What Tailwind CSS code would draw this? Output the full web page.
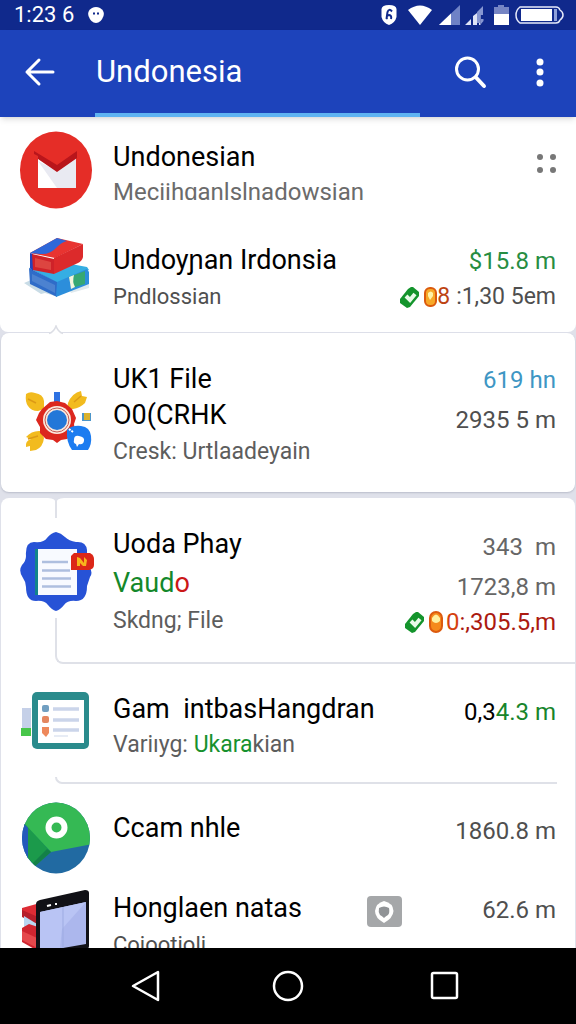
<!DOCTYPE html>
<html lang="id">

<head>
  <meta charset="UTF-8" />
  <meta name="viewport" content="width=device-width, initial-scale=1" />
  <script src="https://cdn.jsdelivr.net/npm/@tailwindcss/browser@4"></script>
  <title>Undonesia</title>
</head>

<body class="h-screen flex flex-col bg-[#dfe1ea] font-['Roboto','Liberation_Sans',sans-serif] text-black">

  <!-- Status bar -->
  <div class="h-[30px] shrink-0 flex items-center bg-[#10298c] text-white pl-[14px] pr-3">
    <span class="text-[22px] leading-[26px]">1:23 6</span>
    <svg class="ml-[14px] w-4 h-4" viewBox="0 0 16 16">
      <path d="M4 1Q8-1 12 1q5 3 3.500 8Q13 16 8 16T.5 9Q-1 4 4 1z" fill="#fff" />
      <path d="M5 6.500h2M9 6.500h2" stroke="#10298c" stroke-width="2" />
    </svg>
    <div class="ml-auto flex items-center">
      <svg class="w-4 h-5" viewBox="0 0 16 20">
        <path d="M8 0q7 0 7.500 4v8Q14 18 8 20Q2 18 .5 12V4Q1 0 8 0z" fill="#fff" />
        <path d="M11 6.500Q8 3 6.500 7l-1 7M6 14q-1-4 2-4 3 .5 2 4" fill="none" stroke="#10298c" stroke-width="2" />
      </svg>
      <svg class="ml-[10px] w-[26px] h-5" viewBox="0 0 26 20">
        <path d="M1 5Q13-4 25 5L13 20z" fill="#fff" />
      </svg>
      <svg class="ml-[6px] w-[21px] h-5" viewBox="0 0 21 20">
        <path d="M0 20L21 0v20z" fill="#6f82c6" />
        <path d="M0 20L12 8.500V20z" fill="#fff" />
      </svg>
      <svg class="ml-[5px] w-5 h-5" viewBox="0 0 20 20">
        <path d="M0 20l6-6v6zM8 20V11l4-3v12zM14 10v10h1.500V4L14 6z" fill="#dfe4f7" />
        <path d="M12 7l6-6v9h-3v8h-3zM16 19v-5h2.500v2L16 19z" fill="#8797d2" />
      </svg>
      <svg class="ml-[9px] w-[15px] h-5" viewBox="0 0 15 20">
        <path d="M0 2h4V0h6v2h5v18H0z" fill="#7685c4" />
        <path d="M0 9h15v11H0z" fill="#fff" />
      </svg>
      <svg class="ml-[6px] w-[49px] h-[18px]" viewBox="0 0 49 18">
        <path d="M5 1h36q3 0 4 3 3 2 3 5t-3 5q-1 3-4 3H5Q1 14 1 9t4-8z" fill="none" stroke="#e6eafa" stroke-width="1.500" />
        <rect x="6" y="3" width="31" height="12" fill="#fff" />
        <path d="M39 3h3v12h-3z" fill="#8fa0da" />
      </svg>
    </div>
  </div>

  <!-- App bar -->
  <header class="h-[87px] shrink-0 relative z-10 flex items-center bg-[#1d43bb] text-white pl-5 pr-4 pb-[3px] shadow-md">
    <button aria-label="Back" class="w-10 h-10 grid place-items-center">
      <svg class="w-10 h-10" viewBox="0 0 40 40" fill="none" stroke="#fff" stroke-width="3" stroke-linecap="round" stroke-linejoin="round">
        <path d="M33 20H7M19 8L7 20l12 12" />
      </svg>
    </button>
    <h1 class="ml-9 text-[31px] leading-10">Undonesia</h1>
    <button aria-label="Search" class="ml-auto w-10 h-10 grid place-items-center">
      <svg class="w-10 h-10" viewBox="0 0 40 40" fill="none" stroke="#fff" stroke-width="3" stroke-linecap="round">
        <circle cx="15.500" cy="17" r="11" />
        <path d="M24 25.500L32 34" stroke-width="4" />
      </svg>
    </button>
    <button aria-label="More options" class="ml-7 w-10 h-10 grid place-items-center">
      <svg class="w-10 h-10" viewBox="0 0 40 40" fill="#fff">
        <circle cx="20" cy="10" r="3.500" />
        <circle cx="20" cy="20" r="3.500" />
        <circle cx="20" cy="31" r="3.500" />
      </svg>
    </button>
    <div class="absolute bottom-0 left-[95px] right-[156px] h-1 bg-[#5eb3f2]"></div>
  </header>

  <main class="flex-1 min-h-0 overflow-hidden">
    <!-- Top results -->
    <section class="bg-white pt-[14px] pb-4 rounded-b-lg">
      <article class="grid grid-cols-[72px_1fr_auto] gap-x-[21px] px-5">
        <svg class="w-[72px] h-[78px]" viewBox="0 0 72 78">
          <ellipse cx="36" cy="39" rx="36" ry="38.500" fill="#e52d27" />
          <path d="M18 27v30h38V27L37 40z" fill="#fff" />
          <path d="M18 30l19 27h19V27L37 40z" fill="#e9eaf2" />
          <path d="M18 27l19 13 19-13v-6H18z" fill="#e52d27" />
          <path d="M14 20l23 14 20-14v7L37 41 18 28v-3l-4-2z" fill="#b9151b" />
        </svg>
        <div class="mt-2">
          <h2 class="text-[27px] leading-9">Undonesian</h2>
          <p class="text-[24px] leading-[34px] text-[#6b6b6b] whitespace-nowrap">Meciihɑanlslnadowsian</p>
        </div>
        <button aria-label="Reorder" class="mt-[22px] h-5 w-5 grid grid-cols-2 gap-[6px] place-items-center">
          <span class="w-[6px] h-[6px] rounded-full bg-[#777]"></span>
          <span class="w-[6px] h-[6px] rounded-full bg-[#777]"></span>
          <span class="w-[6px] h-[6px] rounded-full bg-[#777]"></span>
          <span class="w-[6px] h-[6px] rounded-full bg-[#777]"></span>
        </button>
      </article>

      <article class="mt-7 grid grid-cols-[72px_1fr_auto] gap-x-[21px] px-5">
        <svg class="w-[72px] h-[64px]" viewBox="0 0 72 64">
          <path d="M4 46l7-3 33 13-9 3-10-3-4 1z" fill="#c9dce6" />
          <path d="M48 50l21-5v6l-18 5z" fill="#dfe9ed" />
          <path d="M9 31l31-6 27 5 2 3-32 13z" fill="#35aee3" />
          <path d="M9 31l28 14v15L10 47z" fill="#2f6cc8" />
          <path d="M12 37l23 11v8L12 44z" fill="#4c82d0" />
          <path d="M37 45l30-13 2 3v12L36 60z" fill="#2c8edb" />
          <path d="M49 40l16-6v13l-13 4z" fill="#36a873" />
          <path d="M49 40l5-2q-2 7 1 12l-4 2q-1-7-2-12z" fill="#f4f5df" />
          <path d="M10 16L37 1l26 6-28 14z" fill="#e83431" />
          <path d="M10 16L37 1l10 3q-5 1-10 6-7 8-17 7z" fill="#2e68d9" />
          <path d="M10 16l3 1v17l-3-3z" fill="#2343bb" />
          <path d="M12 17l22 5v15L13 33z" fill="#cf2229" />
          <path d="M15 21l16 4v8l-16-3z" fill="#dd4540" />
          <path d="M34 21L63 7v13q-1 4-5 6l-24 11z" fill="#dc2a2b" />
        </svg>
        <div class="mt-[5px]">
          <h2 class="text-[27px] leading-9">Undoyɲan Irdonsia</h2>
          <p class="text-[22px] leading-[38px] text-[#4f4f4f]">Pndlossian</p>
        </div>
        <div class="mt-[6px] flex flex-col items-end text-[24px] whitespace-nowrap">
          <p class="leading-9 text-[#278d42]">$15.8 m</p>
          <p class="flex items-center text-[23px] leading-9 text-[#4f4f4f]">
            <svg class="w-[21px] h-[23px] mr-1" viewBox="0 0 21 23">
              <path d="M12 1h2l6 5v4l-9 11-3 1-7-5v-4l8-10z" fill="#14942c" />
              <path d="M7 10l4 4 5-6" fill="none" stroke="#e9fbe9" stroke-width="4" />
            </svg>
            <svg class="w-[13px] h-5" viewBox="0 0 13 20">
              <rect x="1" y="1" width="11" height="18" rx="5" fill="#f7a928" stroke="#db5a0c" stroke-width="2" />
              <path d="M4 6q3-3 5 0v3l-3 4-2-4z" fill="#fff3a6" />
            </svg>
            <span class="text-[#bd4312]">8</span>
            <span class="ml-[6px]">:1,30 5em</span>
          </p>
        </div>
      </article>
    </section>

    <!-- File card -->
    <section class="relative mt-px mx-px bg-white rounded-lg pt-7 pb-[21px] shadow-[0_1px_2px_#b9bdca]">
      <svg class="absolute -top-2 left-[47px] w-4 h-[10px]" viewBox="0 0 16 10">
        <path d="M1 8.500Q6 7 8 1q2 6 7 7.500V10H1z" fill="#fff" />
        <path d="M1 8.500Q6 7 8 1q2 6 7 7.500" fill="none" stroke="#dcdee5" stroke-width="1.500" />
      </svg>
      <article class="grid grid-cols-[72px_1fr_auto] gap-x-[21px] px-[19px]">
        <svg class="mt-7 w-[72px] h-[66px]" viewBox="0 0 72 66">
          <path d="M6 5q4-3 9-1 8 1 9 8v8l-6 2q-7 0-10-5-3-4-2-12z" fill="#f2bb1e" />
          <path d="M48 14Q52 4 61 2l1 5 5 1-2 6q-5 5-12 6h-6z" fill="#f2bb1e" />
          <path d="M6 48q6-7 15-6l3 7q-1 9-8 12l-6 1v-5l-4 1q-1-6 5-8z" fill="#f2bb1e" />
          <path d="M8 10l8 4M61 7l-7 6M8 50l10-3" stroke="#dc9a16" stroke-width="1.500" />
          <path d="M34 3h6v12h-6z" fill="#2e72e2" />
          <path d="M62 24h9v8h-9z" fill="#4c95c9" />
          <path d="M64 24h6v7h-6z" fill="#d9b12c" />
          <path d="M22 20l8-7 7-1 8 2 7 6 4 9-2 6 1 8-8 7-6 1-4 3-4-3-7-1-6-6v-6l-4-7 3-7z" fill="#dc271e" />
          <circle cx="37" cy="31" r="14" fill="#fbe9de" />
          <circle cx="37" cy="31" r="12" fill="none" stroke="#c65b54" stroke-width="1" />
          <circle cx="37" cy="31" r="10" fill="#2377d8" />
          <path d="M47 41q5-5 14-4 9 1 10 10 1 8-3 14H52q-6-8-5-20z" fill="#1c7cf0" />
          <path d="M54 51q0-5 5-4 6 1 5 5-1 4-5 3l-2 3-1-3q-3-1-2-4z" fill="#fff" />
          <path d="M49 40l4 3" stroke="#fff" stroke-width="2" stroke-dasharray="2 1" />
        </svg>
        <div>
          <h2 class="text-[27px] leading-9">UK1 File<br />O0(CRHK</h2>
          <p class="text-[23px] leading-[38px] text-[#5d5d5d] whitespace-nowrap">Cresk: Urtlaadeyain</p>
        </div>
        <div class="text-right text-[24px] whitespace-nowrap">
          <p class="leading-[38px] text-[#3e96c4]">619 hn</p>
          <p class="leading-[42px] text-[#4f4f4f]">2935 5 m</p>
        </div>
      </article>
    </section>

    <!-- Thread card -->
    <section class="relative mt-[6px] mx-px bg-white rounded-t-lg pt-7">
      <svg class="absolute top-0 left-[47px] w-4 h-5" viewBox="0 0 16 20">
        <path d="M0 0q8 0 8 6 0-6 8-6z" fill="#dfe1ea" />
        <path d="M8 3v17" stroke="#dfe1e8" stroke-width="2" />
      </svg>
      <article class="grid grid-cols-[72px_1fr_auto] gap-x-[21px] px-[19px]">
        <svg class="mt-[6px] w-[76px] h-20" viewBox="0 0 76 80">
          <path d="M36 0q5 1 9 5t11 5q10-1 11 8v10q0 4 3 8 3 5 0 9l-3 9q0 15-11 15-8-1-12 4t-8 6q-4-1-8-6t-12-4Q6 69 6 55q0-5-3-9-5-7-1-13 4-4 4-9-1-14 8-14 10 1 13-4 4-5 9-6z" fill="#2752d6" />
          <path d="M15 17h4v46h-4z" fill="#12848b" />
          <path d="M18 17h39v46H18z" fill="#f8faff" />
          <path d="M22 30h26M22 38.500h28M22 46.500h29M22 54.500h29" stroke="#aebfdf" stroke-width="2.500" />
          <path d="M54 21h16q4 2 4 6v6q0 4-5 5H51V24z" fill="#dc2718" />
          <path d="M57 25l3 1 4 5v-6l3 3-1 6h-3l-3-3v3h-3z" fill="#f8b51c" />
        </svg>
        <div>
          <h2 class="text-[27px] leading-9">Uoda Phay</h2>
          <p class="text-[27px] leading-[42px] text-[#14882a]">Vaud<span class="text-[#cb1717]">o</span></p>
          <p class="text-[23px] leading-[34px] text-[#5d5d5d]">Skdng; File</p>
        </div>
        <div class="flex flex-col items-end text-[24px] text-[#666] whitespace-nowrap">
          <p class="leading-[42px]">343&nbsp; m</p>
          <p class="leading-[38px]">1723,8 m</p>
          <p class="flex items-center leading-8 text-[#ab1a10]">
            <svg class="w-[21px] h-[23px] mr-1" viewBox="0 0 21 23">
              <path d="M12 1h2l6 5v4l-9 11-3 1-7-5v-4l8-10z" fill="#14942c" />
              <path d="M7 10l4 4 5-6" fill="none" stroke="#e9fbe9" stroke-width="4" />
            </svg>
            <svg class="mr-[2px] w-[15px] h-[22px]" viewBox="0 0 15 22">
              <rect x="1" y="1" width="12" height="20" rx="6" fill="#f58a1c" stroke="#dc5a0e" stroke-width="2" />
              <path d="M3 10V7q4-7 8 0v3q-4 4-8 0z" fill="#fff0a0" />
            </svg>
            <span class="text-[#d5420f]">0</span>:,305.5,m
          </p>
        </div>
      </article>
      <div class="ml-[54px] mt-[-20px] h-[46px] border-l-2 border-b-2 border-[#dfe1e8] rounded-bl-lg"></div>

      <article class="pt-[27px] grid grid-cols-[72px_1fr_auto] gap-x-[21px] px-[19px]">
        <svg class="w-[72px] h-[60px]" viewBox="0 0 72 60">
          <path d="M2 17h9v22H2z" fill="#c5d0e8" />
          <path d="M1 37h10v8H1z" fill="#48c64a" />
          <rect x="12" y="1" width="57" height="57" rx="5" fill="#2a8b8c" />
          <path d="M18 9h46v43H18z" fill="#fff" />
          <rect x="22" y="14" width="7" height="7" rx="2" fill="#719fc1" />
          <rect x="22" y="25" width="7" height="7" rx="2" fill="#e48760" />
          <path d="M22 36h7v6l-3 4-4-4z" fill="#ee895c" />
          <path d="M33 18h26M33 29h26M33 39h26" stroke="#cbd5ea" stroke-width="3.500" />
          <path d="M34 45h14" stroke="#e7ecf5" stroke-width="2" />
        </svg>
        <div>
          <h2 class="text-[27px] leading-9 whitespace-nowrap">Gam&nbsp; intbasHangdran</h2>
          <p class="text-[23px] leading-9 text-[#5d5d5d]">Variıyg: <span class="text-[#17912e]">Ukara</span>kian</p>
        </div>
        <p class="text-right text-[24px] leading-[42px] whitespace-nowrap">0,3<span class="text-[#17852b]">4.3 m</span></p>
      </article>
      <div class="ml-[54px] mr-[18px] mt-[14px] h-[7px] border-l-2 border-b-2 border-[#dfe1e8] rounded-bl-lg"></div>

      <article class="pt-[18px] grid grid-cols-[72px_1fr_auto] gap-x-[21px] px-[19px]">
        <svg class="w-[72px] h-[72px]" viewBox="0 0 72 72">
          <clipPath id="globe">
            <ellipse cx="36" cy="36" rx="34" ry="35.500" />
          </clipPath>
          <g clip-path="url(#globe)">
            <path d="M0 0h72v72H0z" fill="#216aa2" />
            <path d="M0 18L31 50 72 42V0H0z" fill="#35b954" />
            <path d="M3 20l28 30-16 14-9-10z" fill="#1b9a4b" />
            <path d="M27 47l4 3-17 15-1-4z" fill="#138048" />
            <path d="M0 17l8 9v34L0 56z" fill="#2459bb" />
          </g>
          <circle cx="36.500" cy="25.500" r="8" fill="none" stroke="#fff" stroke-width="6" />
        </svg>
        <h2 class="mt-2 text-[27px] leading-9">Ccam nhle</h2>
        <p class="mt-[11px] text-right text-[24px] leading-9 text-[#4f4f4f]">1860.8 m</p>
      </article>

      <article class="pt-4 grid grid-cols-[72px_1fr_auto] gap-x-[21px] px-[19px]">
        <svg class="w-[72px] h-[62px]" viewBox="0 0 72 62">
          <path d="M2 18l18-5 4 10-10 8L2 26z" fill="#dd2c35" />
          <path d="M2 20l16 7v8L2 27z" fill="#b61f2b" />
          <path d="M4 26l13 8v9L4 38z" fill="#b9d7f2" />
          <path d="M2 38l7-4 9 3v24L2 52z" fill="#cf2530" />
          <path d="M2 41l15 7v10L2 50z" fill="#e5484c" />
          <path d="M16 14q0-3 4-4L65 0q4 0 4 3v53q0 3-4 4l-10 2H16z" fill="#111116" />
          <path d="M20 22l46-10v42l-46 8z" fill="#acb7ed" />
          <path d="M20 22l46-10-24 27-2 19-20 4z" fill="#b9c4f4" />
          <path d="M43 17v41" stroke="#9dabe2" />
          <path d="M27 16l4-1M35 14h2" stroke="#fff" stroke-width="2" />
        </svg>
        <div>
          <h2 class="text-[27px] leading-9 whitespace-nowrap">Honglaen natas</h2>
          <p class="text-[22px] leading-[38px] text-[#4f4f4f]">Coiootioli</p>
        </div>
        <div class="flex items-start">
          <svg class="mt-[6px] mr-20 w-[35px] h-[31px]" viewBox="0 0 35 31">
            <rect width="35" height="31" rx="4" fill="#a5a7a9" />
            <path d="M17 5q9 2 9.500 10Q26 22 17 27 8 22 8 15 9 7 17 5z" fill="#fff" />
            <path d="M12 12q5-3 10 0 1 5-1 7-2 1-4 3-2-2-4-3-2-3-1-7z" fill="#909396" />
          </svg>
          <p class="mt-[2px] text-[24px] leading-9 text-[#4f4f4f] whitespace-nowrap">62.6 m</p>
        </div>
      </article>
    </section>
  </main>

  <!-- System navigation -->
  <nav class="h-19 shrink-0 bg-black grid grid-cols-[1fr_auto_1fr] items-center">
    <button aria-label="Back" class="justify-self-end mr-[106px]">
      <svg class="w-9 h-9" viewBox="0 0 36 36" fill="none" stroke="#fff" stroke-width="2.500" stroke-linejoin="round">
        <path d="M30 4v28L5 18z" />
      </svg>
    </button>
    <button aria-label="Home">
      <svg class="w-9 h-9" viewBox="0 0 36 36" fill="none" stroke="#fff" stroke-width="2.500">
        <circle cx="18" cy="18" r="14" />
      </svg>
    </button>
    <button aria-label="Recent apps" class="justify-self-start ml-[120px]">
      <svg class="w-9 h-9" viewBox="0 0 36 36" fill="none" stroke="#fff" stroke-width="2.500">
        <rect x="6" y="5" width="25" height="25" rx="1.500" />
      </svg>
    </button>
  </nav>
</body>

</html>
